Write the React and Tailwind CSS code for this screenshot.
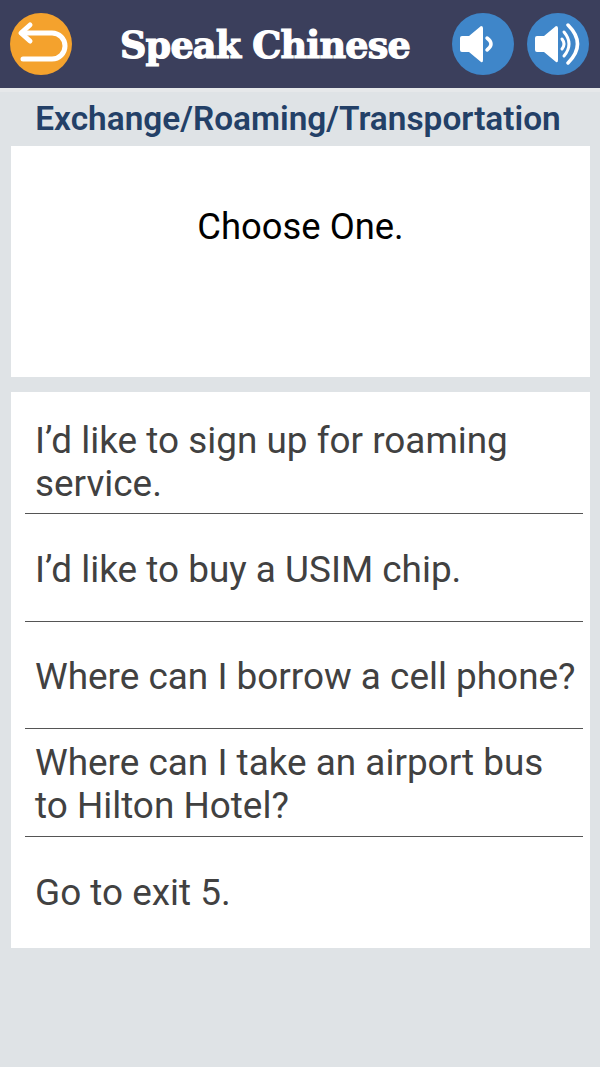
import React from 'react';

const questions = [
  'I’d like to sign up for roaming service.',
  'I’d like to buy a USIM chip.',
  'Where can I borrow a cell phone?',
  'Where can I take an airport bus to Hilton Hotel?',
  'Go to exit 5.',
];

function BackIcon() {
  return (
    <svg viewBox="0 0 62 62" className="w-[62px] h-[62px]">
      <circle cx="31" cy="31" r="31" fill="#f4a22d" />
      <path d="M12 20 H42 a13 13 0 0 1 0 26 H13" fill="none" stroke="#fff" strokeWidth="5" strokeLinecap="round" />
      <path d="M20 12 L11 20 L20 28" fill="none" stroke="#fff" strokeWidth="5" strokeLinecap="round" strokeLinejoin="round" />
    </svg>
  );
}

function SpeakerIcon({ loud }) {
  return (
    <svg viewBox="0 0 62 62" className="w-[62px] h-[62px]">
      <circle cx="31" cy="31" r="31" fill="#3f86c9" />
      <path d="M8 25 Q8 23 10 23 H17 L29 13 Q31 13 31 15 V47 Q31 50 29 49 L17 39 H10 Q8 39 8 37 Z" fill="#fff" />
      {loud ? (
        <g fill="none" stroke="#fff" strokeLinecap="round">
          <path d="M35 26 Q39 31 35 36" strokeWidth="3" />
          <path d="M37 19 Q47 31 37 43" strokeWidth="3" />
          <path d="M41 12 Q60 31 41 50" strokeWidth="3.5" />
        </g>
      ) : (
        <path d="M35 25 Q43 31 35 37" fill="none" stroke="#fff" strokeWidth="3.5" strokeLinecap="round" />
      )}
    </svg>
  );
}

export default function App() {
  return (
    <div className="w-[600px] h-[1067px] bg-[#dfe3e6] font-['Roboto',sans-serif] overflow-hidden">
      {/* Header */}
      <div className="h-[88px] bg-[#3b3f5c] flex items-center pl-[10px] pr-[11px] pb-[1px]">
        <BackIcon />
        <div className="flex-1 text-center text-white text-[36.6px] font-bold font-['DejaVu_Serif',serif] tracking-[-0.8px] pl-[6px] pt-[5px] [-webkit-text-stroke:1.2px_white]">
          Speak Chinese
        </div>
        <div className="flex gap-[13px]">
          <SpeakerIcon />
          <SpeakerIcon loud />
        </div>
      </div>
      <div className="h-[4px] bg-[#e6e8ea]" />

      <div className="h-[54px] flex items-center justify-center text-[#234067] text-[33.4px] font-semibold pt-[1px] pr-[4px]">
        Exchange/Roaming/Transportation
      </div>

      <div className="ml-[11px] w-[579px] h-[231px] bg-white flex justify-center pt-[57px] text-[36.4px] leading-[48px] text-black">
        Choose One.
      </div>

      {/* Answers */}
      <div className="ml-[11px] w-[579px] mt-[15px] bg-white pl-[14px] pr-[7px] pt-[15px] pb-[4px]">
        {questions.map((q, i) => (
          <div
            key={q}
            className={`h-[107.4px] flex items-center pl-[10px] pt-[4px] text-[36.9px] leading-[43px] text-[#414141] ${i < questions.length - 1 ? 'border-b border-[#555555]' : ''}`}
          >
            {q}
          </div>
        ))}
      </div>
    </div>
  );
}
